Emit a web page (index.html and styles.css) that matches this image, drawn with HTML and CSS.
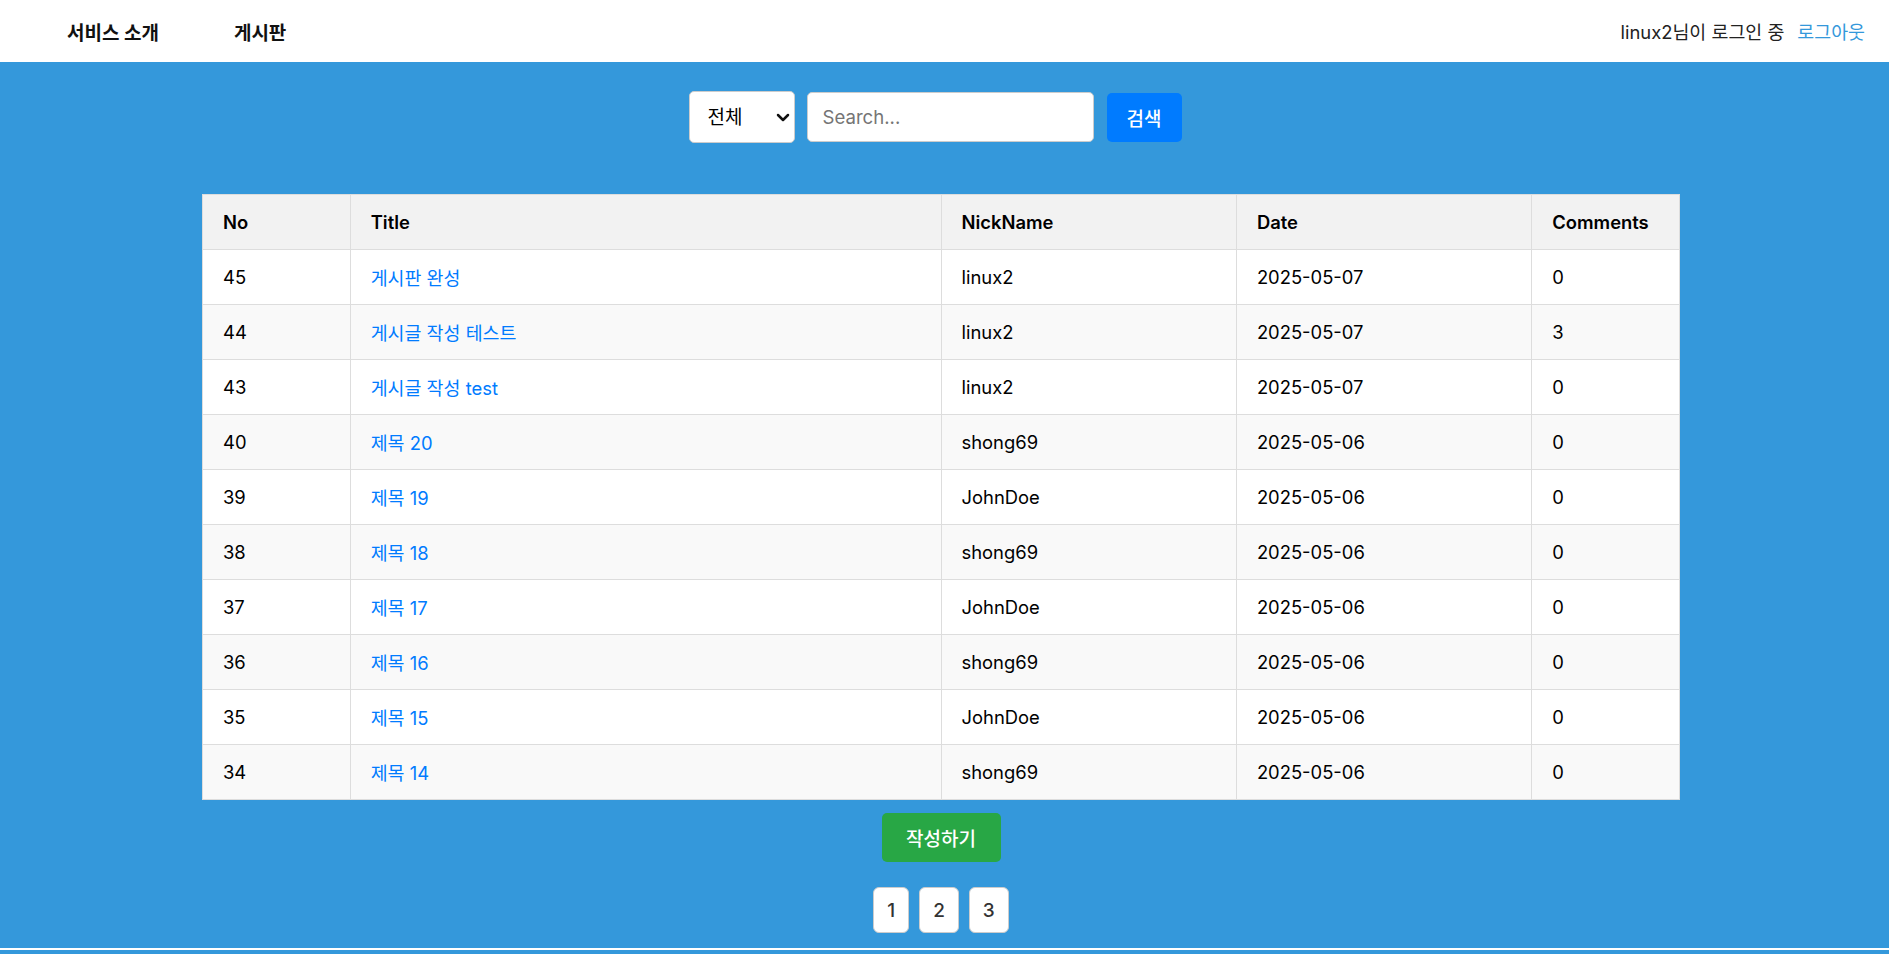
FILE: index.html
```html
<!DOCTYPE html>
<html lang="ko">
<head>
<meta charset="utf-8">
<title>게시판</title>
<link rel="stylesheet" href="styles.css">
</head>
<body>
<header class="topbar">
  <nav class="nav">
    <a class="nav-link" href="#">서비스 소개</a>
    <a class="nav-link" href="#">게시판</a>
  </nav>
  <div class="user">
    <span class="user-name">linux2님이 로그인 중</span>
    <a class="logout" href="#">로그아웃</a>
  </div>
</header>
<main class="main">
  <div class="inner">
    <form class="search">
      <span class="select-wrap">
        <select class="search-select">
          <option>전체</option>
          <option>제목</option>
          <option>작성자</option>
        </select>
        <svg class="chev" width="14" height="9" viewBox="0 0 14 9" aria-hidden="true"><path d="M2 2 L7 7 L12 2" fill="none" stroke="#111" stroke-width="2.5" stroke-linecap="round" stroke-linejoin="round"/></svg>
      </span>
      <input class="search-input" type="text" placeholder="Search...">
      <button class="search-btn" type="button">검색</button>
    </form>
    <table class="board">
      <colgroup>
        <col class="c-no"><col class="c-title"><col class="c-nick"><col class="c-date"><col class="c-com">
      </colgroup>
      <thead>
        <tr><th>No</th><th>Title</th><th>NickName</th><th>Date</th><th>Comments</th></tr>
      </thead>
      <tbody>
        <tr><td>45</td><td><a href="#">게시판 완성</a></td><td>linux2</td><td>2025-05-07</td><td>0</td></tr>
        <tr><td>44</td><td><a href="#">게시글 작성 테스트</a></td><td>linux2</td><td>2025-05-07</td><td>3</td></tr>
        <tr><td>43</td><td><a href="#">게시글 작성 test</a></td><td>linux2</td><td>2025-05-07</td><td>0</td></tr>
        <tr><td>40</td><td><a href="#">제목 20</a></td><td>shong69</td><td>2025-05-06</td><td>0</td></tr>
        <tr><td>39</td><td><a href="#">제목 19</a></td><td>JohnDoe</td><td>2025-05-06</td><td>0</td></tr>
        <tr><td>38</td><td><a href="#">제목 18</a></td><td>shong69</td><td>2025-05-06</td><td>0</td></tr>
        <tr><td>37</td><td><a href="#">제목 17</a></td><td>JohnDoe</td><td>2025-05-06</td><td>0</td></tr>
        <tr><td>36</td><td><a href="#">제목 16</a></td><td>shong69</td><td>2025-05-06</td><td>0</td></tr>
        <tr><td>35</td><td><a href="#">제목 15</a></td><td>JohnDoe</td><td>2025-05-06</td><td>0</td></tr>
        <tr><td>34</td><td><a href="#">제목 14</a></td><td>shong69</td><td>2025-05-06</td><td>0</td></tr>
      </tbody>
    </table>
    <button class="write-btn" type="button">작성하기</button>
    <div class="pager">
      <a class="page" href="#">1</a>
      <a class="page" href="#">2</a>
      <a class="page" href="#">3</a>
    </div>
  </div>
</main>
<div class="rule"></div>
<footer class="footer"></footer>
</body>
</html>
```

FILE: styles.css
```css
* { box-sizing: border-box; }
html, body { margin: 0; padding: 0; }
body {
  font-family: Inter, "Noto Sans CJK KR", sans-serif;
  color: #000;
  background: #fff;
  width: 1889px;
}
a { text-decoration: none; }

.topbar {
  height: 62px;
  display: flex;
  align-items: center;
  justify-content: space-between;
  padding: 0 24px 0 67px;
  background: #fff;
}
.nav { display: flex; gap: 75px; }
.nav-link {
  color: #111;
  font-weight: 700;
  font-size: 19px;
}
.user { display: flex; align-items: center; gap: 13px; font-size: 18.4px; }
.user-name { color: #222; }
.logout { color: #3498db; }

.main {
  background: #3498db;
  height: 886px;
}
.inner {
  width: 1882px;
  display: flex;
  flex-direction: column;
  align-items: center;
  padding-top: 29px;
}
.search {
  display: flex;
  align-items: center;
  gap: 12px;
  margin: 0 12px 0 0;
}
.select-wrap { position: relative; display: block; height: 52px; }
.search-select {
  appearance: none;
  -webkit-appearance: none;
  width: 106px;
  height: 52px;
  font-family: inherit;
  font-size: 19px;
  padding: 0 30px 0 18px;
  border: 1px solid #ccc;
  border-radius: 5px;
  background: #fff;
  color: #000;
}
.chev {
  position: absolute;
  right: 5px;
  top: 22px;
  pointer-events: none;
}
.search-input {
  width: 287px;
  height: 50px;
  font-family: inherit;
  font-size: 18.6px;
  padding: 0 15px;
  border: 1px solid #ccc;
  border-radius: 5px;
  color: #000;
}
.search-input::placeholder { color: #757575; }
.search-btn {
  width: 75px;
  height: 49px;
  background: #007bff;
  color: #fff;
  border: none;
  border-radius: 5px;
  font-family: inherit;
  font-size: 19px;
  font-weight: 500;
  margin-left: 1px;
}

.board {
  margin-top: 51px;
  width: 1478px;
  border-collapse: collapse;
  background: #fff;
  font-size: 18.4px;
  table-layout: fixed;
}
.c-no, .c-com { width: 10%; }
.c-title { width: 40%; }
.c-nick, .c-date { width: 20%; }
.board th, .board td {
  height: 55px;
  padding: 0 20px;
  text-align: left;
  border: 1px solid #ddd;
}
.board th { background: #f2f2f2; font-weight: 600; }
.board tbody tr:nth-child(even) td { background: #f9f9f9; }
.board td a { color: #007bff; }

.write-btn {
  margin-top: 13px;
  width: 119px;
  height: 49px;
  background: #28a745;
  color: #fff;
  border: none;
  border-radius: 5px;
  font-family: inherit;
  font-size: 19px;
  font-weight: 500;
}
.pager { display: flex; gap: 10px; margin-top: 25px; }
.page {
  height: 46px;
  min-width: 35px;
  padding: 0 13px;
  display: flex;
  align-items: center;
  justify-content: center;
  background: #fff;
  border: 1px solid #ccc;
  border-radius: 6px;
  color: #333;
  font-size: 19px;
  font-weight: 500;
}
.rule { height: 2px; background: #fff; }
.footer { height: 40px; background: #3498db; }
```
